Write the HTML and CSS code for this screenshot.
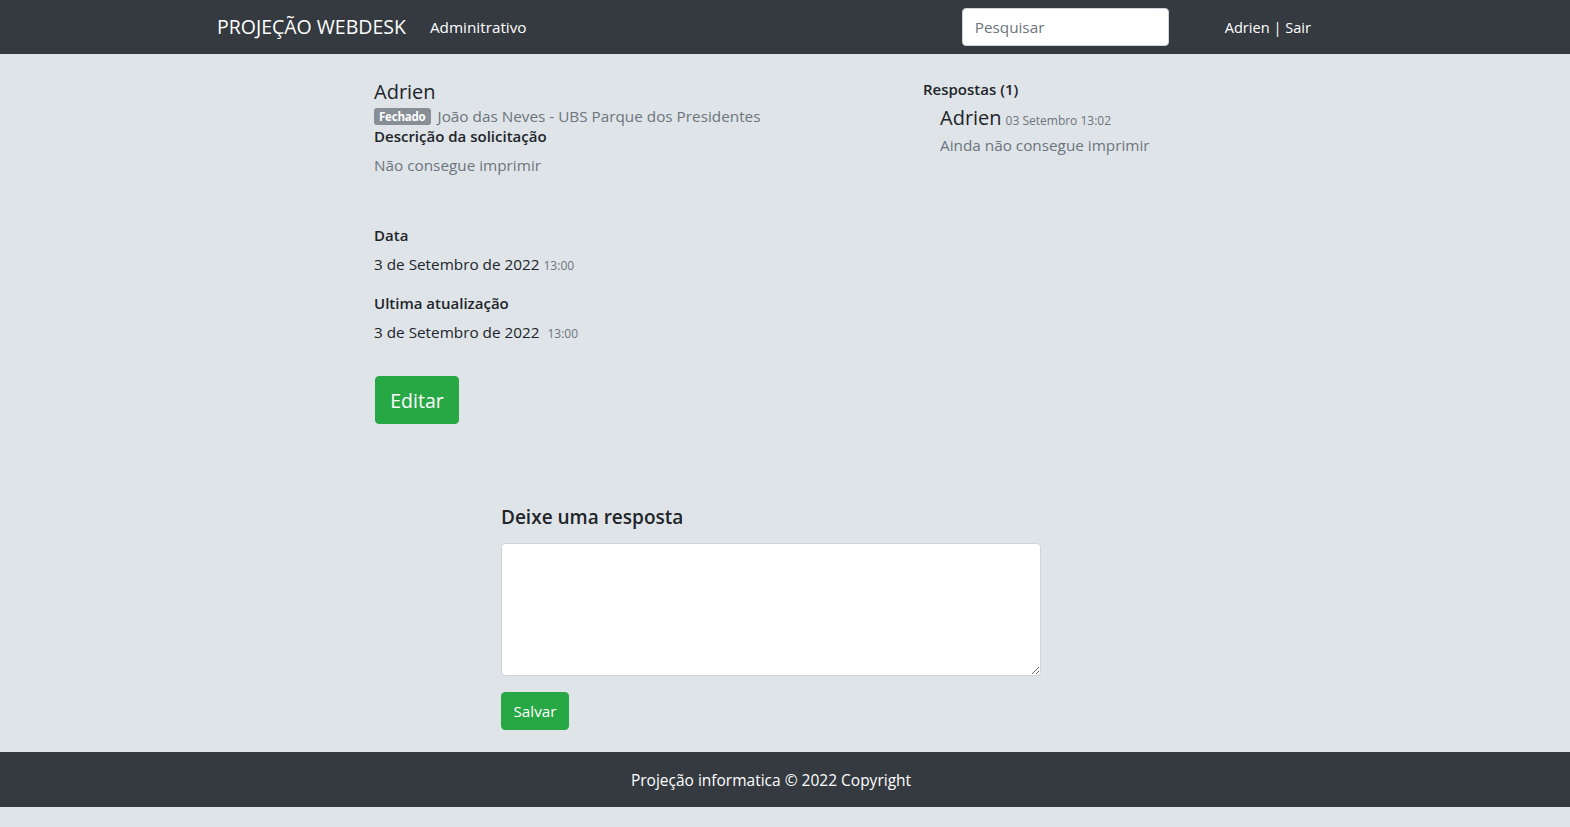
FILE: index.html
```html
<!DOCTYPE html>
<html lang="pt-BR">
<head>
<meta charset="utf-8">
<title>Projeção Webdesk</title>
<link rel="stylesheet" href="styles.css">
</head>
<body>
<nav class="navbar">
  <div class="nav-inner">
    <a class="brand">PROJEÇÃO WEBDESK</a>
    <a class="nav-link">Adminitrativo</a>
    <div class="spacer"></div>
    <input class="search" type="text" placeholder="Pesquisar">
    <span class="user">Adrien | Sair</span>
  </div>
</nav>
<main class="main">
  <div class="ticket">
    <section class="details">
      <h2 class="title">Adrien</h2>
      <div class="meta"><span class="badge">Fechado</span><span class="muted">João das Neves - UBS Parque dos Presidentes</span></div>
      <h6 class="label">Descrição da solicitação</h6>
      <p class="muted desc">Não consegue imprimir</p>
      <h6 class="label label-data">Data</h6>
      <p class="value">3 de Setembro de 2022 <small class="time">13:00</small></p>
      <h6 class="label label-upd">Ultima atualização</h6>
      <p class="value">3 de Setembro de 2022 &nbsp;<small class="time">13:00</small></p>
      <button class="btn btn-lg">Editar</button>
    </section>
    <aside class="replies">
      <h6 class="replies-title">Respostas (1)</h6>
      <div class="reply">
        <div class="reply-head"><span class="reply-name">Adrien</span> <small class="time">03 Setembro 13:02</small></div>
        <p class="muted">Ainda não consegue imprimir</p>
      </div>
    </aside>
  </div>
  <form class="reply-form">
    <h4 class="form-title">Deixe uma resposta</h4>
    <textarea class="textarea"></textarea>
    <button class="btn btn-save" type="button">Salvar</button>
  </form>
</main>
<footer class="footer">Projeção informatica © 2022 Copyright</footer>
</body>
</html>
```
FILE: styles.css
```css
* { box-sizing: border-box; }
html, body { margin: 0; padding: 0; }
body {
  background: #dfe4e8;
  font-family: "Open Sans", "Noto Sans", sans-serif;
  font-size: 15.3px;
  color: #212529;
}
.navbar { background: #343a40; height: 54px; }
.nav-inner {
  width: 1140px; margin: 0 auto; height: 54px;
  display: flex; align-items: center; padding-bottom: 1px;
}
.brand { color: #fff; font-size: 19.5px; padding-left: 2px; margin-right: 24px; }
.nav-link { color: #fff; font-size: 15.3px; }
.spacer { flex: 1; }
.search {
  width: 207px; height: 38px; border: 1px solid #ced4da; border-radius: 4px;
  padding: 0 12px; font-family: inherit; font-size: 15.3px; color: #495057; background: #fff;
  margin-right: 56px;
}
.search::placeholder { color: #6c757d; }
.user { color: #fff; font-size: 14.6px; margin-right: 44px; }

.main { width: 822px; margin: 0 auto; padding-top: 26px; padding-bottom: 22px; }
.ticket { display: flex; }
.details { width: 549px; }
.replies { flex: 1; }
.title { font-size: 20px; font-weight: 500; margin: 0; line-height: 24px; }
.meta { display: flex; align-items: center; margin-top: 2px; height: 20px; }
.badge {
  background: #868e96; color: #fff; font-size: 11.5px; font-weight: 700;
  border-radius: 3px; padding: 0 5px; height: 17px; line-height: 17px; margin-right: 7px;
  letter-spacing: -0.2px;
}
.muted { color: #6c757d; margin: 0; font-size: 15.3px; }
.label { font-size: 15px; font-weight: 600; margin: 0; line-height: 20px; }
.desc { margin-top: 9px; line-height: 20px; }
.label-data { margin-top: 50px; }
.label-upd { margin-top: 17px; }
.value { margin: 9px 0 0; font-size: 15.3px; line-height: 20px; }
.time { font-size: 12px; color: #6c757d; }
.btn {
  background: #28a745; color: #fff; border: 1px solid #28a745; border-radius: 4px;
  font-family: inherit; cursor: pointer;
}
.btn-lg { font-size: 19.5px; height: 48px; width: 84px; margin-top: 32px; margin-left: 1px; }
.replies-title { font-size: 15px; font-weight: 600; margin: 0; line-height: 18px; }
.reply { padding-left: 17px; margin-top: 8px; }
.reply-name { font-size: 20px; font-weight: 500; }
.reply-head { line-height: 24px; }
.reply .muted { margin-top: 2px; }

.reply-form { margin-left: 127px; margin-top: 79px; width: 540px; }
.form-title { font-size: 19px; font-weight: 600; margin: 0 0 12px; line-height: 28px; }
.textarea {
  display: block; width: 540px; height: 133px; border: 1px solid #ced4da; border-radius: 4px;
  background: #fff; resize: vertical;
}
.btn-save { font-size: 15.3px; height: 38px; width: 68px; margin-top: 16px; padding: 0; }
.footer {
  background: #343a40; color: #fff; height: 55px; display: flex; align-items: center;
  justify-content: center; font-size: 15.5px; padding-right: 28px;
}
```
